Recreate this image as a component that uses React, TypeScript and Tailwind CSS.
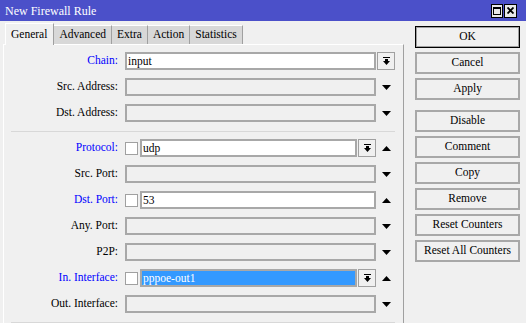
import { ReactNode } from "react";

type Row = {
  label: string;
  blue?: boolean;
  check?: boolean;
  value?: string;
  white?: boolean;
  picker?: boolean;
  selected?: boolean;
  arrow?: "up" | "down";
};

const topRows: Row[] = [
  { label: "Chain:", blue: true, value: "input", white: true, picker: true },
  { label: "Src. Address:", arrow: "down" },
  { label: "Dst. Address:", arrow: "down" },
];

const bottomRows: Row[] = [
  { label: "Protocol:", blue: true, check: true, value: "udp", white: true, picker: true, arrow: "up" },
  { label: "Src. Port:", arrow: "down" },
  { label: "Dst. Port:", blue: true, check: true, value: "53", white: true, arrow: "up" },
  { label: "Any. Port:", arrow: "down" },
  { label: "P2P:", arrow: "down" },
  { label: "In. Interface:", blue: true, check: true, value: "pppoe-out1", selected: true, picker: true, arrow: "up" },
  { label: "Out. Interface:", arrow: "down" },
];

const tabs = ["General", "Advanced", "Extra", "Action", "Statistics"];

const buttons = [
  ["OK", "Cancel", "Apply"],
  ["Disable", "Comment", "Copy", "Remove", "Reset Counters", "Reset All Counters"],
];

const Arrow = ({ dir }: { dir: "up" | "down" }) => (
  <svg width="9" height="5" viewBox="0 0 9 5">
    {dir === "down" ? <polygon points="0,0 9,0 4.5,5" fill="#000" /> : <polygon points="0,5 9,5 4.5,0" fill="#000" />}
  </svg>
);

const PickerIcon = () => (
  <svg width="7" height="9" viewBox="0 0 7 9">
    <rect x="0" y="0" width="7" height="1" fill="#000" />
    <rect x="2" y="2" width="3" height="2" fill="#000" />
    <polygon points="0,4 7,4 3.5,8" fill="#000" />
  </svg>
);

const Picker = () => (
  <div className="w-[18px] h-[18px] shrink-0 border border-[#a0a0a0] bg-[#f0f0f0] flex items-center justify-center">
    <PickerIcon />
  </div>
);

const Field = ({ row }: { row: Row }) => {
  const bg = row.selected ? "bg-[#3399ff] text-white" : row.white ? "bg-white" : "bg-[#f0f0f0]";
  return (
    <div className={`flex-1 h-[18px] border-2 border-[#a8a8a8] pl-[1px] leading-[14px] ${bg}`}>
      {row.value}
    </div>
  );
};

const FormRow = ({ row }: { row: Row }) => (
  <div className="flex items-center h-[18px]">
    <div className={`w-[114px] text-right ${row.blue ? "text-[#0000ff]" : "text-black"}`}>{row.label}</div>
    <div className="ml-[7px] w-[251px] flex items-center">
      {row.check && <div className="w-[13px] h-[13px] border border-[#a0a0a0] bg-white mr-[2px] shrink-0" />}
      <Field row={row} />
      {row.picker && row.arrow && <div className="ml-[1px]"><Picker /></div>}
    </div>
    <div className="ml-[1px] w-[18px] flex justify-center">
      {row.arrow && <Arrow dir={row.arrow} />}
      {row.picker && !row.arrow && <Picker />}
    </div>
  </div>
);

const Separator = ({ className }: { className: string }) => (
  <div className={`ml-[7px] w-[384px] border-t border-[#d8d8d8] ${className}`} />
);

const WinButton = ({ children, primary }: { children: ReactNode; primary?: boolean }) => (
  <div
    className={`w-[105px] h-[22px] flex items-center justify-center ${
      primary ? "border border-black shadow-[inset_0_0_0_1px_#a0a0a0]" : "border-2 border-[#a8a8a8]"
    }`}
  >
    {children}
  </div>
);

export default function App() {
  return (
    <div className="w-[526px] h-[323px] overflow-hidden bg-[#f0f0f0] flex flex-col text-[11.5px] text-black [font-family:'Liberation_Serif',serif]">
      <div className="h-[21px] shrink-0 bg-[#4b50c9] flex items-center pl-[5px] pr-[9px]">
        <span className="text-white text-[12px] flex-1">New Firewall Rule</span>
        <div className="flex gap-[1px] items-center">
          <div className="w-[12px] h-[14px] border border-black bg-[#e8e8e8] flex items-center justify-center">
            <div className="w-[8px] h-[8px] border border-black border-t-2" />
          </div>
          <div className="w-[13px] h-[14px] border border-black bg-[#e8e8e8] flex items-center justify-center">
            <svg width="7" height="7" viewBox="0 0 7 7">
              <path d="M0.5 0.5 L6.5 6.5 M6.5 0.5 L0.5 6.5" stroke="#000" strokeWidth="1.8" />
            </svg>
          </div>
        </div>
      </div>

      <div className="flex flex-1 min-h-0">
        <div className="w-[404px] flex flex-col">
          <div className="flex items-end h-[23px] pl-[5px] pt-[2px]">
            {tabs.map((t, i) =>
              i === 0 ? (
                <div key={t} className="h-[22px] pl-[5px] pr-[6px] flex items-center bg-[#f0f0f0] border-t border-l border-white border-r border-r-[#a0a0a0] -mb-[1px] relative z-10">
                  {t}
                </div>
              ) : (
                <div key={t} className="h-[19px] px-[5px] flex items-center bg-[#d8d8d8] border-t border-white border-r border-r-[#a0a0a0]">
                  {t}
                </div>
              )
            )}
          </div>
          <div className="flex-1 ml-[3px] border-t border-l border-white border-r border-r-[#a0a0a0] pt-[7px]">
            <div className="flex flex-col gap-[8px]">
              {topRows.map((r) => (
                <FormRow key={r.label} row={r} />
              ))}
            </div>
            <Separator className="mt-[9px] mb-[7px]" />
            <div className="flex flex-col gap-[8px]">
              {bottomRows.map((r) => (
                <FormRow key={r.label} row={r} />
              ))}
            </div>
            <Separator className="mt-[9px]" />
          </div>
        </div>

        <div className="flex-1 pl-[11px] pt-[5px] flex flex-col">
          <div className="flex flex-col gap-[4px]">
            {buttons[0].map((b, i) => (
              <WinButton key={b} primary={i === 0}>{b}</WinButton>
            ))}
          </div>
          <div className="flex flex-col gap-[4px] mt-[10px]">
            {buttons[1].map((b) => (
              <WinButton key={b}>{b}</WinButton>
            ))}
          </div>
        </div>
      </div>
    </div>
  );
}
